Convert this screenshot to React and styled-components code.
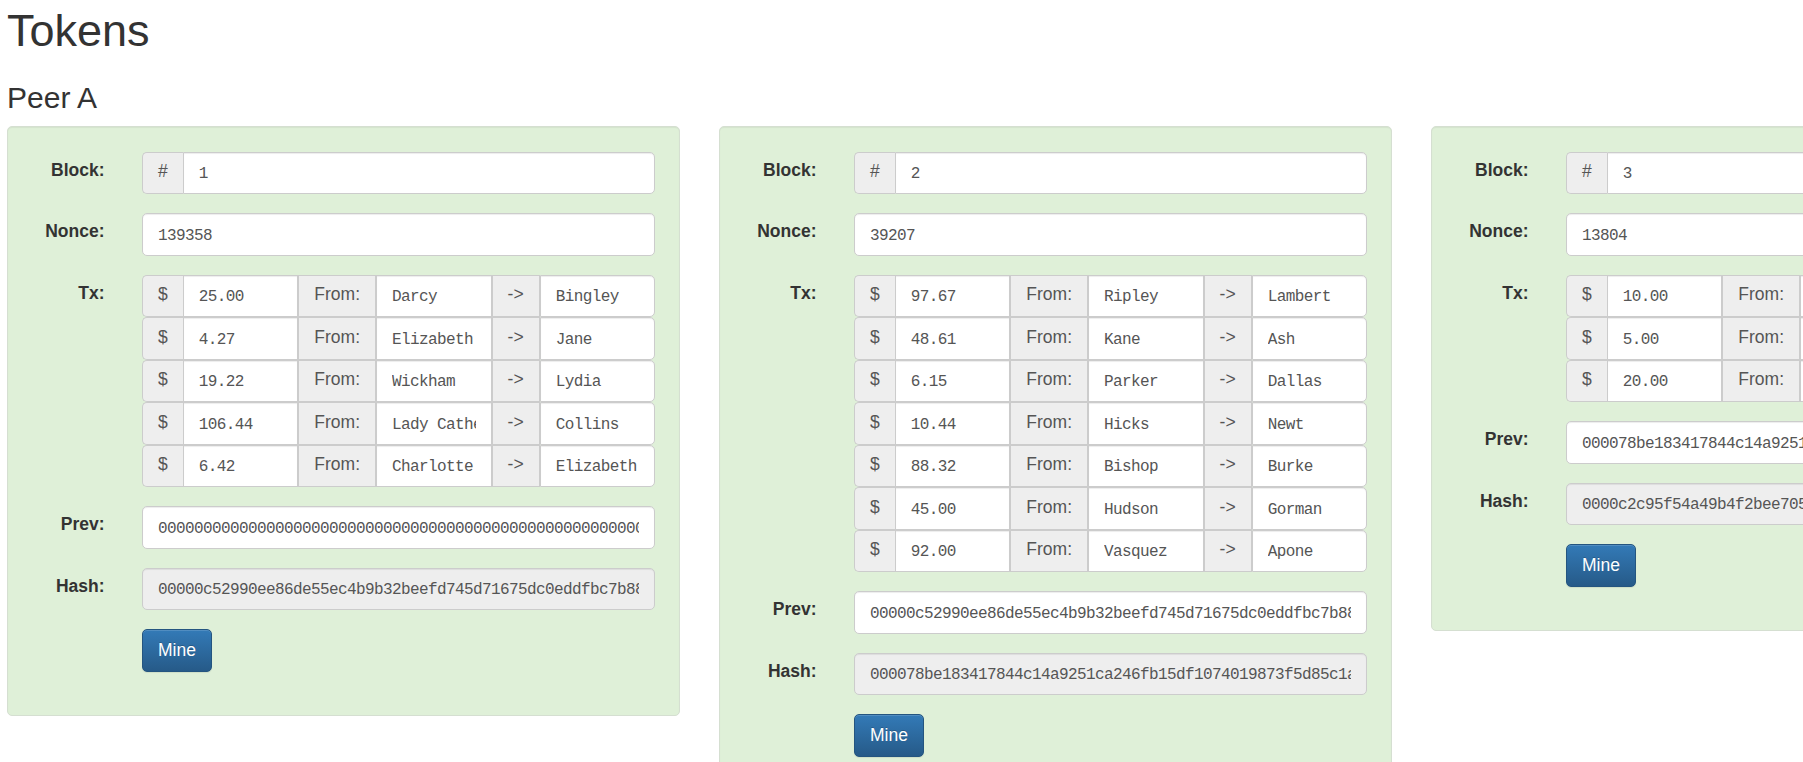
import React from "react";
import styled, { createGlobalStyle } from "styled-components";

const blocks = [
  {
    number: "1",
    nonce: "139358",
    txs: [
      ["25.00", "Darcy", "Bingley"],
      ["4.27", "Elizabeth", "Jane"],
      ["19.22", "Wickham", "Lydia"],
      ["106.44", "Lady Catherine", "Collins"],
      ["6.42", "Charlotte", "Elizabeth"],
    ],
    prev: "0000000000000000000000000000000000000000000000000000000000000000",
    hash: "00000c52990ee86de55ec4b9b32beefd745d71675dc0eddfbc7b88a1e27c37b1",
  },
  {
    number: "2",
    nonce: "39207",
    txs: [
      ["97.67", "Ripley", "Lambert"],
      ["48.61", "Kane", "Ash"],
      ["6.15", "Parker", "Dallas"],
      ["10.44", "Hicks", "Newt"],
      ["88.32", "Bishop", "Burke"],
      ["45.00", "Hudson", "Gorman"],
      ["92.00", "Vasquez", "Apone"],
    ],
    prev: "00000c52990ee86de55ec4b9b32beefd745d71675dc0eddfbc7b88a1e27c37b1",
    hash: "000078be183417844c14a9251ca246fb15df1074019873f5d85c1a3e9d07b2c4",
  },
  {
    number: "3",
    nonce: "13804",
    txs: [
      ["10.00", "Emily", "Jackson"],
      ["5.00", "Madison", "Jackson"],
      ["20.00", "Lucas", "Grace"],
    ],
    prev: "000078be183417844c14a9251ca246fb15df1074019873f5d85c1a3e9d07b2c4",
    hash: "0000c2c95f54a49b4f2bee705a81c3e04b6d92f1e7a5c83d16b0f2a9e4c7d318",
  },
];

const GlobalStyle = createGlobalStyle`
  html, body {
    margin: 0;
    overflow: hidden;
    background: #fff;
  }
  body {
    font-family: "Liberation Sans", Arial, Helvetica, sans-serif;
    font-size: 17.5px;
    line-height: 25px;
    color: #333;
  }
`;

const Page = styled.div`
  padding: 6px 0 0 7px;
`;

const Title = styled.h1`
  margin: 0 0 25px;
  font-size: 45px;
  line-height: 1.1;
  font-weight: 500;
  color: #333;
`;

const PeerTitle = styled.h3`
  margin: 0 0 12.5px;
  font-size: 30px;
  line-height: 1.1;
  font-weight: 500;
  color: #333;
`;

const Chain = styled.div`
  display: flex;
  align-items: flex-start;
  gap: 39px;
  width: max-content;
`;

const Well = styled.div`
  flex: 0 0 673px;
  box-sizing: border-box;
  padding: 24.5px 23.75px 24.5px;
  background: #dff0d8;
  border: 1px solid #d5dfd1;
  border-radius: 5px;
  box-shadow: inset 0 1px 1px rgba(0, 0, 0, 0.05);
`;

const FormGroup = styled.div`
  display: grid;
  grid-template-columns: 72.75px 1fr;
  column-gap: 37.5px;
  align-items: start;
  margin-bottom: 19px;
`;

const Label = styled.label`
  text-align: right;
  padding-top: 6px;
  font-weight: bold;
  color: #333;
`;

const InputGroup = styled.div`
  display: flex;
  height: 42.5px;
`;

const TxList = styled.div`
  display: flex;
  flex-direction: column;
`;

const Addon = styled.span`
  flex: 0 0 auto;
  box-sizing: border-box;
  display: flex;
  align-items: center;
  justify-content: center;
  padding: 0 15px 2px;
  font-size: 17.5px;
  line-height: 1;
  color: #555;
  background: #eee;
  border: 1px solid #ccc;
  border-right-width: ${(p) => (p.$first ? 0 : "1px")};
  border-radius: ${(p) => (p.$first ? "5px 0 0 5px" : "0")};
`;

const Field = styled.input`
  flex: 1 1 0;
  min-width: 0;
  width: 100%;
  box-sizing: border-box;
  height: 42.5px;
  margin: 0;
  padding: 9px 15px 6px;
  font-family: "Liberation Mono", "Courier New", monospace;
  font-size: 16px;
  letter-spacing: -0.6px;
  line-height: 25px;
  color: #555;
  background: ${(p) => (p.$readonly ? "#eee" : "#fff")};
  border: 1px solid #ccc;
  border-radius: ${(p) => p.$radius || "5px"};
  box-shadow: inset 0 1px 1px rgba(0, 0, 0, 0.075);
  outline: none;
`;

const MineButton = styled.button`
  justify-self: start;
  box-sizing: border-box;
  height: 42.5px;
  padding: 7.5px 15px;
  font-family: "Liberation Sans", Arial, sans-serif;
  font-size: 17.5px;
  line-height: 25px;
  color: #fff;
  text-shadow: 0 -1px 0 rgba(0, 0, 0, 0.2);
  background: linear-gradient(to bottom, #337ab7 0%, #265a88 100%);
  border: 1px solid #245580;
  border-radius: 5px;
  box-shadow: inset 0 1px 0 rgba(255, 255, 255, 0.15), 0 1px 1px rgba(0, 0, 0, 0.075);
  cursor: pointer;
`;

const TxRow = ({ amount, from, to }) => (
  <InputGroup>
    <Addon $first>$</Addon>
    <Field defaultValue={amount} $radius="0" />
    <Addon>From:</Addon>
    <Field defaultValue={from} $radius="0" />
    <Addon>-&gt;</Addon>
    <Field defaultValue={to} $radius="0 5px 5px 0" />
  </InputGroup>
);

const BlockCard = ({ block }) => (
  <Well>
    <FormGroup>
      <Label>Block:</Label>
      <InputGroup>
        <Addon $first>#</Addon>
        <Field defaultValue={block.number} $radius="0 5px 5px 0" />
      </InputGroup>
    </FormGroup>
    <FormGroup>
      <Label>Nonce:</Label>
      <Field defaultValue={block.nonce} />
    </FormGroup>
    <FormGroup>
      <Label>Tx:</Label>
      <TxList>
        {block.txs.map(([amount, from, to], i) => (
          <TxRow key={i} amount={amount} from={from} to={to} />
        ))}
      </TxList>
    </FormGroup>
    <FormGroup>
      <Label>Prev:</Label>
      <Field defaultValue={block.prev} />
    </FormGroup>
    <FormGroup>
      <Label>Hash:</Label>
      <Field defaultValue={block.hash} $readonly readOnly />
    </FormGroup>
    <FormGroup>
      <span />
      <MineButton>Mine</MineButton>
    </FormGroup>
  </Well>
);

export default function App() {
  return (
    <Page>
      <GlobalStyle />
      <Title>Tokens</Title>
      <PeerTitle>Peer A</PeerTitle>
      <Chain>
        {blocks.map((b) => (
          <BlockCard key={b.number} block={b} />
        ))}
      </Chain>
    </Page>
  );
}
